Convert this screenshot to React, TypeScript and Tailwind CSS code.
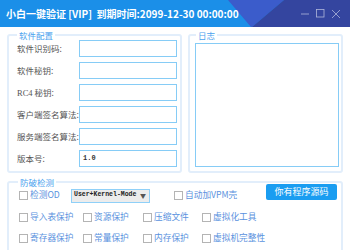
import { ReactNode } from 'react';

const cjk = { fontFamily: '"Noto Sans CJK SC", "Noto Sans", sans-serif' };

function Field({ label, value }: { label: ReactNode; value?: string }) {
  return (
    <div className="flex items-center h-[17px]">
      <div className="w-[62px] text-[8.5px] leading-none text-[#555] whitespace-nowrap">{label}</div>
      <div className="w-[98px] h-[17px] border border-[#86ccf6] bg-white flex items-center pl-[3px]">
        {value && (
          <span className="text-[7px] font-bold text-[#333]" style={{ fontFamily: '"Liberation Mono", monospace' }}>
            {value}
          </span>
        )}
      </div>
    </div>
  );
}

function Check({ label, w }: { label: string; w?: string }) {
  return (
    <div className={`flex items-center ${w ?? ''}`}>
      <div className="w-[9px] h-[9px] border border-[#b4b4b4] bg-white shrink-0" />
      <span className="ml-[2px] text-[8.7px] leading-none text-[#5a92de] whitespace-nowrap">{label}</span>
    </div>
  );
}

function Group({
  title,
  className,
  legend,
  children,
}: {
  title: string;
  className?: string;
  legend?: string;
  children: ReactNode;
}) {
  return (
    <fieldset className={`border-2 border-[#e2eefb] rounded-[3px] ${className ?? ''}`}>
      <legend className={`px-[2px] text-[8.5px] leading-[10px] text-[#4aa2ee] ${legend ?? ''}`}>{title}</legend>
      {children}
    </fieldset>
  );
}

export default function App() {
  return (
    <div className="w-[350px] h-[250px] overflow-hidden bg-white" style={cjk}>
      <div className="relative h-[27px] bg-[#1b8fe8] flex items-center">
        <svg className="absolute inset-0" width="350" height="27">
          <polygon points="228,0 284,0 252,27 251,27" fill="#3b5ccb" />
          <polygon points="284,0 350,0 350,27 252,27" fill="#34459f" />
        </svg>
        <div className="relative pl-[6px] text-[10px] font-bold text-white whitespace-pre">
          小白一键验证 [VIP]  到期时间:2099-12-30 00:00:00
        </div>
        <div className="relative ml-auto mr-[9px] flex items-center gap-[6px] text-[#aeb6da]">
          <svg width="9" height="9" viewBox="0 0 9 9">
            <line x1="0" y1="5" x2="8" y2="5" stroke="currentColor" strokeWidth="0.8" />
          </svg>
          <svg width="9" height="9" viewBox="0 0 9 9">
            <rect x="0.5" y="0.5" width="7.5" height="7.5" fill="none" stroke="currentColor" strokeWidth="0.8" />
          </svg>
          <svg width="10" height="10" viewBox="0 0 10 10">
            <path d="M1 1 L9 9 M9 1 L1 9" stroke="currentColor" strokeWidth="0.8" />
          </svg>
        </div>
      </div>

      <div className="px-[7px] pt-[3px]">
        <div className="flex gap-[6px]">
          <Group title="软件配置" legend="ml-0" className="w-[175px] pl-[8px] pr-[3px] pb-[4px]">
            <div className="flex flex-col gap-[5px]">
              <Field label="软件识别码:" />
              <Field label="软件秘钥:" />
              <Field
                label={
                  <>
                    <span style={{ fontFamily: '"Liberation Serif", serif' }}>RC4</span> 秘钥:
                  </>
                }
              />
              <Field label="客户端签名算法:" />
              <Field label="服务端签名算法:" />
              <Field label="版本号:" value="1.0" />
            </div>
          </Group>
          <Group title="日志" legend="ml-[1px]" className="flex-1 flex flex-col pl-[5px] pr-[2px] pb-[4px]">
            <div className="mt-[3px] h-[124px] border border-[#86ccf6] bg-white" />
          </Group>
        </div>

        <Group title="防破检测" legend="-ml-[1px]" className="mt-[4px] pl-[10px] pr-[2px] h-[90px]">
          <div className="flex items-center h-[15px] mt-[1px]">
            <Check label="检测OD" w="w-[52px]" />
            <div className="w-[79px] h-[14px] border border-[#8fd0f8] bg-[#ececec] flex items-center pl-[2px]">
              <span
                className="text-[6.5px] font-bold text-[#222] leading-none"
                style={{ fontFamily: '"Liberation Mono", monospace' }}
              >
                User+Kernel-Mode
              </span>
              <span className="ml-auto mr-[3px] text-[6px] text-[#555] leading-none">▼</span>
            </div>
            <div className="ml-[24px]">
              <Check label="自动加VPM壳" />
            </div>
            <button className="ml-auto mr-[2px] -mt-[8px] w-[71px] h-[16px] bg-[#1a9df1] rounded-[2px] text-[9px] leading-none text-white">
              你有程序源码
            </button>
          </div>
          <div className="flex items-center mt-[10px]">
            <Check label="导入表保护" w="w-[64px]" />
            <Check label="资源保护" w="w-[60px]" />
            <Check label="压缩文件" w="w-[59px]" />
            <Check label="虚拟化工具" />
          </div>
          <div className="flex items-center mt-[12px]">
            <Check label="寄存器保护" w="w-[64px]" />
            <Check label="常量保护" w="w-[60px]" />
            <Check label="内存保护" w="w-[59px]" />
            <Check label="虚拟机完整性" />
          </div>
        </Group>
      </div>
    </div>
  );
}
